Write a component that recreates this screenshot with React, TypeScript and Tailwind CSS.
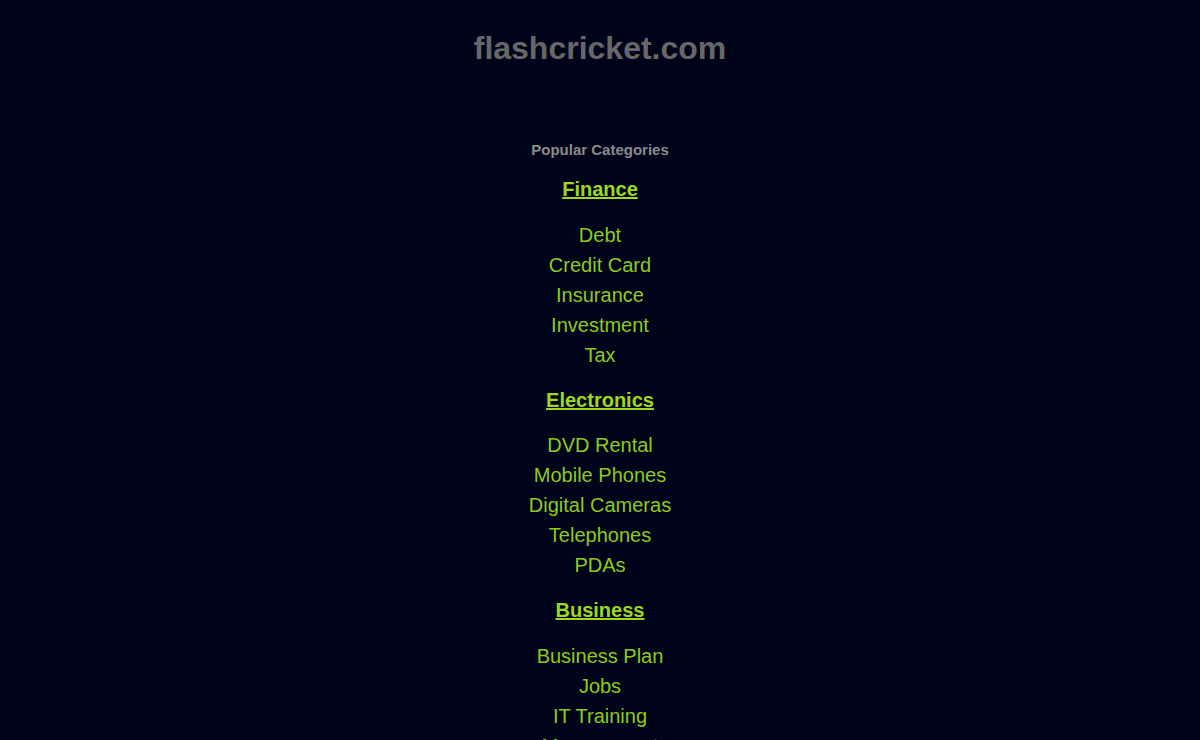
import React from 'react';

const categories = [
    { title: 'Finance', gap: 'mb-[16px]', items: ['Debt', 'Credit Card', 'Insurance', 'Investment', 'Tax'] },
    { title: 'Electronics', gap: 'mb-[15px]', items: ['DVD Rental', 'Mobile Phones', 'Digital Cameras', 'Telephones', 'PDAs'] },
    { title: 'Business', gap: 'mb-[16px]', items: ['Business Plan', 'Jobs', 'IT Training', 'Management'] },
];

const App: React.FC = () => {
    return (
        <div className="min-h-screen bg-[#00041a] font-['Liberation_Sans',Arial,sans-serif] text-center">
            <div className="pt-[30px]">
                <h1 className="text-[32px] leading-[37px] font-bold text-[#676767]">flashcricket.com</h1>
            </div>

            <div className="mt-[74px] flex flex-col items-center">
                <h2 className="text-[15px] leading-[18px] font-bold text-[#8a8a8a]">Popular Categories</h2>

                {categories.map(cat => (
                    <div key={cat.title} className="flex flex-col items-center">
                        <a href="#" className={`mt-[15px] ${cat.gap} text-[20px] leading-[30px] font-bold underline text-[#9ed81c]`}>
                            {cat.title}
                        </a>
                        <ul className="flex flex-col items-center">
                            {cat.items.map(item => (
                                <li key={item}>
                                    <a href="#" className="text-[20px] leading-[30px] text-[#8fca18]">{item}</a>
                                </li>
                            ))}
                        </ul>
                    </div>
                ))}
            </div>
        </div>
    );
};

export default App;
